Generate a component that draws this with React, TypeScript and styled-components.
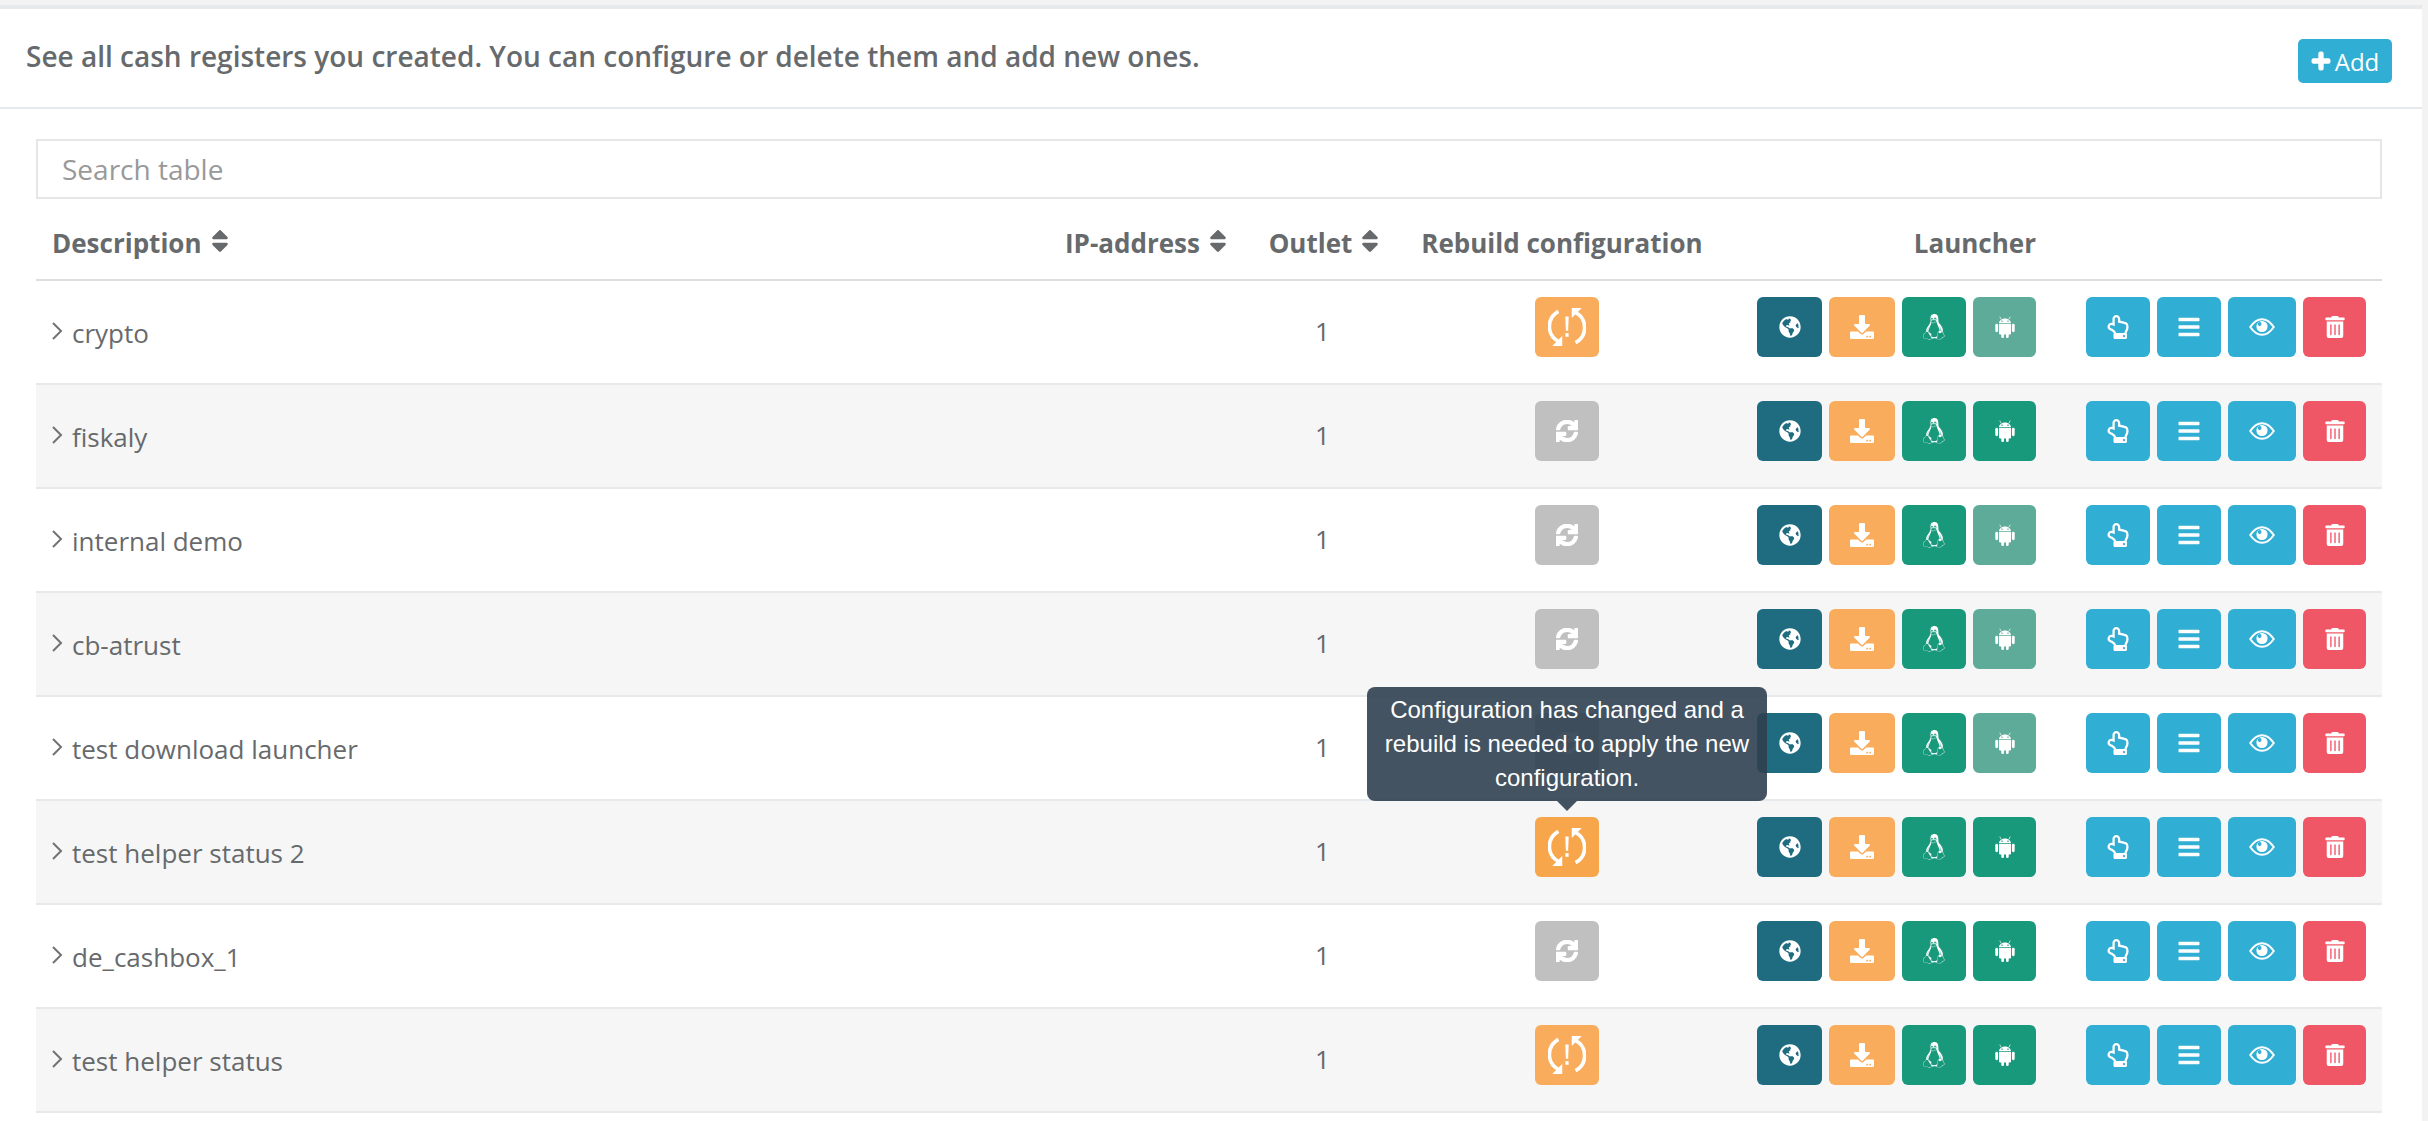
import React from "react";
import styled, { createGlobalStyle } from "styled-components";
import {
  FaBars,
  FaDownload,
  FaGlobeAmericas,
  FaLinux,
  FaPlus,
  FaRegHandPointUp,
  FaSort,
  FaSync,
  FaTrashAlt,
} from "react-icons/fa";

const GlobalStyle = createGlobalStyle`
  html, body {
    margin: 0;
    padding: 0;
    height: 1121px;
    overflow: hidden;
    background: #f3f3f4;
    font-family: "Open Sans", sans-serif;
    color: #676a6c;
  }
`;

const Page = styled.div`
  padding: 5px 6px 0 0;
`;

const Panel = styled.section`
  background: #fff;
  border-top: 4px solid #e7eaec;
  height: 1112px;
`;

const TitleBar = styled.header`
  height: 98px;
  box-sizing: content-box;
  border-bottom: 2px solid #e7eaec;
  display: flex;
  justify-content: space-between;
  padding: 0 30px 0 26px;
`;

const Title = styled.h5`
  margin: 30px 0 0;
  font-size: 28px;
  line-height: 34px;
  font-weight: 600;
`;

const AddButton = styled.button`
  margin-top: 30px;
  width: 94px;
  height: 44px;
  border: 0;
  border-radius: 5px;
  background: #31aed3;
  color: #fff;
  font: 400 24px "Open Sans", sans-serif;
  padding: 0;
  display: flex;
  align-items: center;
  justify-content: center;
  gap: 4px;
  svg { width: 20px; height: 20px; stroke-width: 40; }
`;

const Content = styled.div`
  padding: 30px 40px 0 36px;
`;

const Search = styled.input`
  display: block;
  box-sizing: border-box;
  width: 100%;
  height: 60px;
  border: 2px solid #e5e6e7;
  padding: 0 24px;
  font: 400 28px "Open Sans", sans-serif;
  color: #676a6c;
  &::placeholder { color: #999; opacity: 1; }
`;

const columns = "1014px 205px 135px 354px 306px 332px";

const HeadRow = styled.div`
  display: grid;
  grid-template-columns: ${columns};
  height: 80px;
  border-bottom: 2px solid #ddd;
`;

const HeadCell = styled.div<{ $align?: string; $pad?: string }>`
  display: flex;
  align-items: center;
  gap: 4px;
  box-sizing: border-box;
  padding: ${(p) => p.$pad ?? "8px 0 0"};
  justify-content: ${(p) => p.$align ?? "flex-start"};
  font-size: 26px;
  font-weight: 700;
  white-space: nowrap;
  svg { width: 28px; height: 28px; margin-top: -4px; }
`;

const Row = styled.div<{ $alt: boolean }>`
  display: grid;
  grid-template-columns: ${columns};
  box-sizing: border-box;
  height: 104px;
  border-bottom: 2px solid #e7eaec;
  background: ${(p) => (p.$alt ? "#f6f6f6" : "#fff")};
  padding-top: 16px;
`;

const NameCell = styled.div`
  display: flex;
  align-items: center;
  height: 72px;
  padding-left: 15px;
  gap: 9px;
  font-size: 26px;
  svg { flex: none; margin-top: -5px; }
`;

const OutletCell = styled.div`
  height: 68px;
  display: flex;
  align-items: center;
  justify-content: center;
  font-size: 26px;
`;

const RebuildCell = styled.div`
  display: flex;
  justify-content: center;
`;

const ButtonGroup = styled.div<{ $gap: number }>`
  display: flex;
  justify-content: flex-end;
  gap: ${(p) => p.$gap}px;
  padding-right: 14px;
`;

const ActionGroup = styled(ButtonGroup)`
  padding-right: 16px;
`;

const IconButton = styled.button<{ $bg: string; $w?: number; $icon?: number; $bold?: number }>`
  position: relative;
  width: ${(p) => p.$w ?? 64}px;
  height: 60px;
  border: 0;
  padding: 0;
  border-radius: 6px;
  background: ${(p) => p.$bg};
  color: #fff;
  display: flex;
  align-items: center;
  justify-content: center;
  > svg {
    width: ${(p) => p.$icon ?? 24}px;
    height: ${(p) => p.$icon ?? 24}px;
    stroke-width: ${(p) => p.$bold ?? 0};
  }
`;

const Tooltip = styled.div`
  position: absolute;
  z-index: 5;
  left: 50%;
  bottom: 76px;
  transform: translateX(-50%);
  box-sizing: border-box;
  width: 400px;
  height: 114px;
  padding: 6px 10px;
  border-radius: 8px;
  background: rgba(47, 64, 80, 0.9);
  color: #fff;
  font: 400 24px/34px "Liberation Sans", Arial, sans-serif;
  text-align: center;
  &::after {
    content: "";
    position: absolute;
    left: 50%;
    top: 100%;
    margin-left: -10px;
    border-style: solid;
    border-width: 10px 10px 0;
    border-color: rgba(47, 64, 80, 0.9) transparent transparent;
  }
`;

const Chevron = () => (
  <svg width="12" height="20" viewBox="0 0 12 20" fill="none" stroke="#707375" strokeWidth="2">
    <path d="M2 2l8 8-8 8" />
  </svg>
);

const RebuildWarning = () => (
  <svg viewBox="0 0 40 40" fill="#fff">
    <path d="M11 3.500A18 18 0 0 0 10.500 35" fill="none" stroke="#fff" strokeWidth="3.800" />
    <path d="M29 36.500A18 18 0 0 0 29.500 5" fill="none" stroke="#fff" strokeWidth="3.800" />
    <path d="M4.500 40H15V29.500z" />
    <path d="M35.500 0H25v10.500z" />
    <path d="M18.200 9h3.600l-.6 15h-2.400z" />
    <rect x="18.300" y="26.500" width="3.400" height="3.800" />
  </svg>
);

const AndroidIcon = () => (
  <svg viewBox="0 0 20 22" fill="currentColor" fillRule="evenodd">
    <path d="M4 7.200C4 4.600 6.600 2.400 10 2.400s6 2.200 6 4.800zM7 4.400a.7.7 0 1 0 .01 0zM13 4.400a.7.7 0 1 0 .01 0z" />
    <path d="M6 3.200L4.800.6M14 3.200L15.200.6" stroke="currentColor" strokeWidth=".7" fill="none" />
    <path d="M4 8h12v9.500a1 1 0 0 1-1 1H5a1 1 0 0 1-1-1z" />
    <rect x="6.300" y="17" width="2.700" height="5" rx="1.350" />
    <rect x="11" y="17" width="2.700" height="5" rx="1.350" />
    <rect x="0.300" y="7.800" width="2.800" height="8.400" rx="1.400" />
    <rect x="16.900" y="7.800" width="2.800" height="8.400" rx="1.400" />
  </svg>
);

const EyeIcon = () => (
  <svg viewBox="0 0 26 18" fill="none">
    <path
      d="M1.200 9C5 3.500 9.500 1.200 13 1.200S21 3.500 24.800 9C21 14.500 16.500 16.800 13 16.800S5 14.500 1.200 9z"
      stroke="#fff"
      strokeWidth="2"
    />
    <circle cx="13" cy="8.500" r="5.600" fill="#fff" />
    <circle cx="10.600" cy="6" r="1.900" fill="#31aed3" />
  </svg>
);

const COLORS = {
  teal: "#1f6b80",
  orange: "#f9ad5c",
  orangeHover: "#f7a64c",
  green: "#19997c",
  greenFaded: "#5eab99",
  blue: "#31aed3",
  red: "#f05766",
  grey: "#c0c0c0",
};

type Rebuild = "warn" | "hover" | "ok";

type Register = { name: string; rebuild: Rebuild; androidReady: boolean };

const registers: Register[] = [
  { name: "crypto", rebuild: "warn", androidReady: false },
  { name: "fiskaly", rebuild: "ok", androidReady: true },
  { name: "internal demo", rebuild: "ok", androidReady: false },
  { name: "cb-atrust", rebuild: "ok", androidReady: false },
  { name: "test download launcher", rebuild: "ok", androidReady: false },
  { name: "test helper status 2", rebuild: "hover", androidReady: true },
  { name: "de_cashbox_1", rebuild: "ok", androidReady: true },
  { name: "test helper status", rebuild: "warn", androidReady: true },
];

const RebuildButton = ({ state }: { state: Rebuild }) => {
  if (state === "ok") {
    return (
      <IconButton $bg={COLORS.grey} $icon={22} $bold={30}>
        <FaSync />
      </IconButton>
    );
  }
  return (
    <IconButton $bg={state === "hover" ? COLORS.orangeHover : COLORS.orange} $icon={38}>
      <RebuildWarning />
      {state === "hover" && (
        <Tooltip>Configuration has changed and a rebuild is needed to apply the new configuration.</Tooltip>
      )}
    </IconButton>
  );
};

export default function App() {
  return (
    <Page>
      <GlobalStyle />
      <Panel>
        <TitleBar>
          <Title>See all cash registers you created. You can configure or delete them and add new ones.</Title>
          <AddButton>
            <FaPlus />
            Add
          </AddButton>
        </TitleBar>
        <Content>
          <Search placeholder="Search table" readOnly />
          <HeadRow>
            <HeadCell $pad="8px 0 0 16px">
              Description <FaSort />
            </HeadCell>
            <HeadCell $pad="8px 0 0 15px">
              IP-address <FaSort />
            </HeadCell>
            <HeadCell $align="center" $pad="8px 0 0 8px">
              Outlet <FaSort />
            </HeadCell>
            <HeadCell $align="center" $pad="8px 10px 0 0">
              Rebuild configuration
            </HeadCell>
            <HeadCell $align="flex-end" $pad="8px 14px 0 0">
              Launcher
            </HeadCell>
            <HeadCell />
          </HeadRow>
          {registers.map((r, i) => (
            <Row key={r.name} $alt={i % 2 === 1}>
              <NameCell>
                <Chevron />
                {r.name}
              </NameCell>
              <div />
              <OutletCell>1</OutletCell>
              <RebuildCell>
                <RebuildButton state={r.rebuild} />
              </RebuildCell>
              <ButtonGroup $gap={7}>
                <IconButton $bg={COLORS.teal} $w={65} $icon={22}>
                  <FaGlobeAmericas />
                </IconButton>
                <IconButton $bg={COLORS.orange} $w={66} $icon={24}>
                  <FaDownload />
                </IconButton>
                <IconButton $bg={COLORS.green} $icon={26}>
                  <FaLinux />
                </IconButton>
                <IconButton $bg={r.androidReady ? COLORS.green : COLORS.greenFaded} $w={63} $icon={22}>
                  <AndroidIcon />
                </IconButton>
              </ButtonGroup>
              <ActionGroup $gap={7}>
                <IconButton $bg={COLORS.blue} $icon={24}>
                  <FaRegHandPointUp />
                </IconButton>
                <IconButton $bg={COLORS.blue} $icon={24}>
                  <FaBars />
                </IconButton>
                <IconButton $bg={COLORS.blue} $w={68} $icon={26}>
                  <EyeIcon />
                </IconButton>
                <IconButton $bg={COLORS.red} $w={63} $icon={22}>
                  <FaTrashAlt />
                </IconButton>
              </ActionGroup>
            </Row>
          ))}
        </Content>
      </Panel>
    </Page>
  );
}
